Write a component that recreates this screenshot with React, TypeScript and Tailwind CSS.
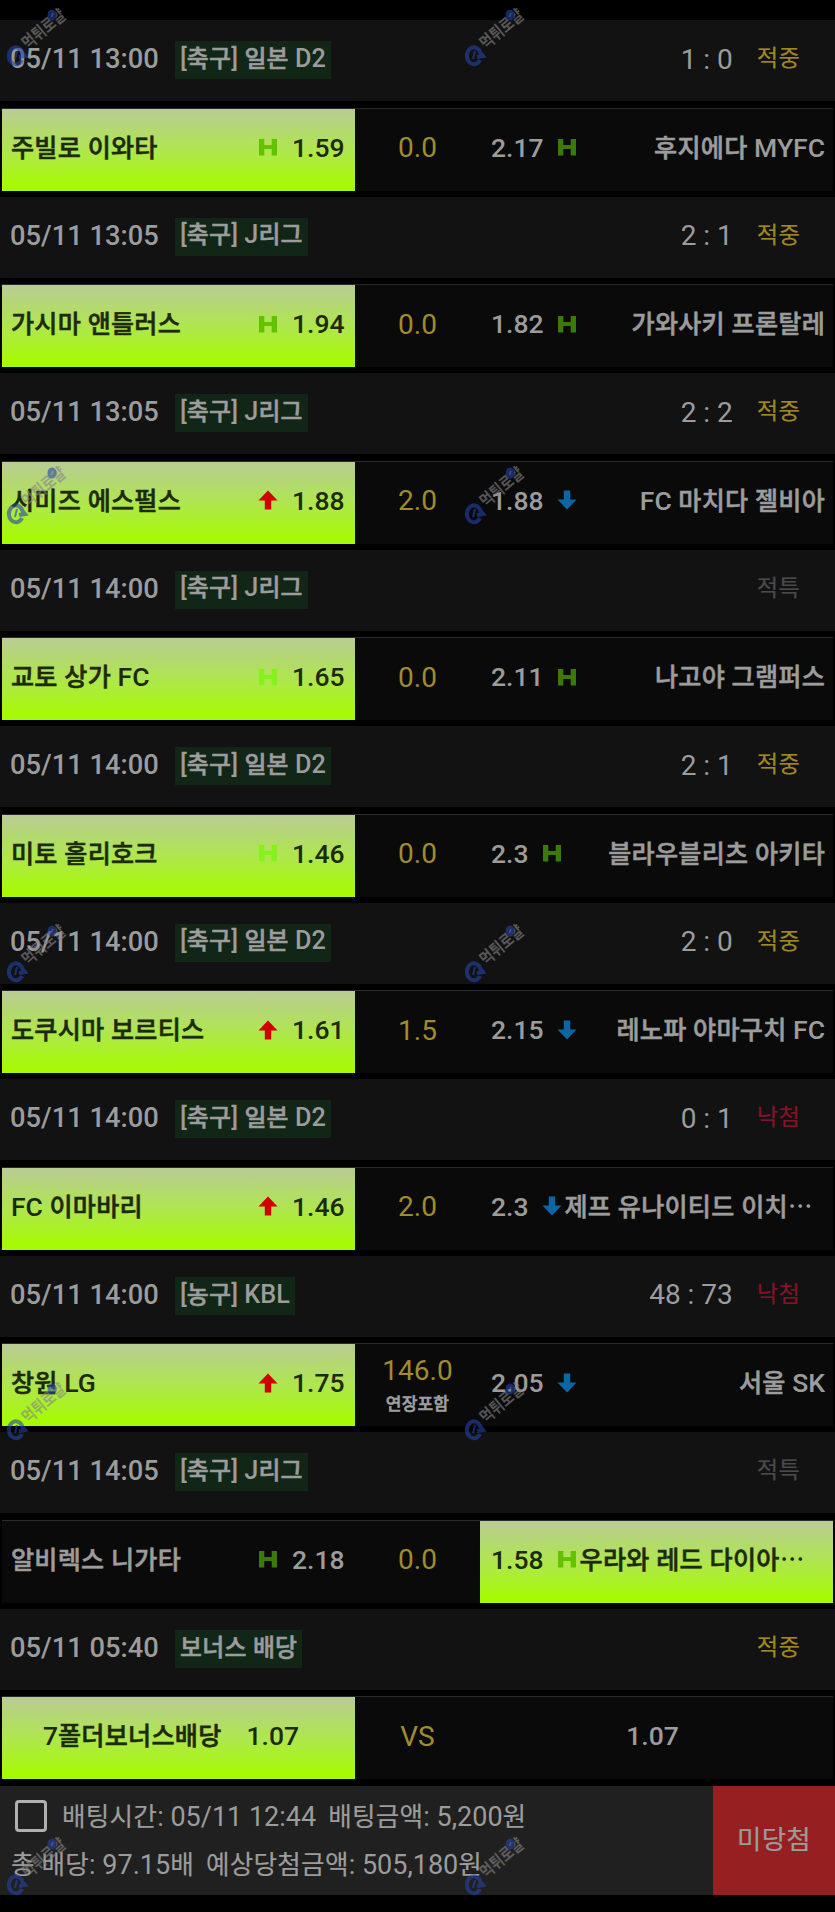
import type { ReactNode } from 'react'

type Mark = 'H' | 'G' | 'up' | 'down'
type Result = '적중' | '적특' | '낙첨'

interface Match {
  time: string
  league: string
  score?: string
  result: Result
  pick: 'home' | 'away'
  home: string
  homeOdds: string
  homeMark?: Mark
  line: string
  note?: string
  away?: string
  awayOdds: string
  awayMark?: Mark
}

const matches: Match[] = [
  { time: '05/11 13:00', league: '[축구] 일본 D2', score: '1 : 0', result: '적중', pick: 'home', home: '주빌로 이와타', homeOdds: '1.59', homeMark: 'H', line: '0.0', awayOdds: '2.17', awayMark: 'H', away: '후지에다 MYFC' },
  { time: '05/11 13:05', league: '[축구] J리그', score: '2 : 1', result: '적중', pick: 'home', home: '가시마 앤틀러스', homeOdds: '1.94', homeMark: 'H', line: '0.0', awayOdds: '1.82', awayMark: 'H', away: '가와사키 프론탈레' },
  { time: '05/11 13:05', league: '[축구] J리그', score: '2 : 2', result: '적중', pick: 'home', home: '시미즈 에스펄스', homeOdds: '1.88', homeMark: 'up', line: '2.0', awayOdds: '1.88', awayMark: 'down', away: 'FC 마치다 젤비아' },
  { time: '05/11 14:00', league: '[축구] J리그', result: '적특', pick: 'home', home: '교토 상가 FC', homeOdds: '1.65', homeMark: 'G', line: '0.0', awayOdds: '2.11', awayMark: 'H', away: '나고야 그램퍼스' },
  { time: '05/11 14:00', league: '[축구] 일본 D2', score: '2 : 1', result: '적중', pick: 'home', home: '미토 홀리호크', homeOdds: '1.46', homeMark: 'G', line: '0.0', awayOdds: '2.3', awayMark: 'H', away: '블라우블리츠 아키타' },
  { time: '05/11 14:00', league: '[축구] 일본 D2', score: '2 : 0', result: '적중', pick: 'home', home: '도쿠시마 보르티스', homeOdds: '1.61', homeMark: 'up', line: '1.5', awayOdds: '2.15', awayMark: 'down', away: '레노파 야마구치 FC' },
  { time: '05/11 14:00', league: '[축구] 일본 D2', score: '0 : 1', result: '낙첨', pick: 'home', home: 'FC 이마바리', homeOdds: '1.46', homeMark: 'up', line: '2.0', awayOdds: '2.3', awayMark: 'down', away: '제프 유나이티드 이치⋯' },
  { time: '05/11 14:00', league: '[농구] KBL', score: '48 : 73', result: '낙첨', pick: 'home', home: '창원 LG', homeOdds: '1.75', homeMark: 'up', line: '146.0', note: '연장포함', awayOdds: '2.05', awayMark: 'down', away: '서울 SK' },
  { time: '05/11 14:05', league: '[축구] J리그', result: '적특', pick: 'away', home: '알비렉스 니가타', homeOdds: '2.18', homeMark: 'H', line: '0.0', awayOdds: '1.58', awayMark: 'H', away: '우라와 레드 다이아⋯' },
  { time: '05/11 05:40', league: '보너스 배당', result: '적중', pick: 'home', home: '7폴더보너스배당', homeOdds: '1.07', line: 'VS', awayOdds: '1.07' },
]

const resultColor: Record<Result, string> = {
  적중: 'text-[#a08824]',
  적특: 'text-[#4a4a4a]',
  낙첨: 'text-[#84122a]',
}

// Hangul runs are set slightly smaller than the digits and latin letters
function Ko({ children, bold = false }: { children: string; bold?: boolean }) {
  return (
    <>
      {children.split(/([가-힣]+|⋯)/).map((part, i) => {
        if (i % 2 === 0) return part
        if (part === '⋯')
          return (
            <span key={i} className="inline-block w-[22px] origin-left scale-x-[0.92]">
              ⋯
            </span>
          )
        return (
          <span
            key={i}
            className={`font-['Noto_Sans_CJK_KR',sans-serif] text-[0.948em] tracking-[0.01em] ${
              bold ? '[-webkit-text-stroke:0.55px_currentColor]' : '[-webkit-text-stroke:0.2px_currentColor]'
            }`}
          >
            {part}
          </span>
        )
      })}
    </>
  )
}

function MarkIcon({ mark, active }: { mark: Mark; active: boolean }) {
  if (mark === 'up' || mark === 'down') {
    return (
      <svg viewBox="0 0 20 20" className={`mb-0.5 h-5 w-5 shrink-0 ${mark === 'up' ? 'text-[#d00000]' : 'rotate-180 text-[#0a66a4]'}`}>
        <path d="M10 0.5 19.5 10.5H13.2V19.5H6.8V10.5H0.5Z" fill="currentColor" />
      </svg>
    )
  }
  const color = mark === 'G' ? 'text-[#85f21c]' : active ? 'text-[#62c400]' : 'text-[#3b7a08]'
  return (
    <svg viewBox="0 0 20 20" className={`mb-0.5 h-5 w-5 shrink-0 ${color}`}>
      <path d="M1 2H6.3V8H13.7V2H19V18.5H13.7V12H6.3V18.5H1Z" fill="currentColor" />
    </svg>
  )
}

function Cell({ active, children, className }: { active: boolean; children: ReactNode; className: string }) {
  return (
    <div
      className={`flex h-full w-[353px] items-center whitespace-nowrap pb-[3px] text-[26.5px] font-medium ${
        active ? 'bg-linear-to-b/srgb from-[#b8cd90] from-3% via-[#afe64e] via-50% to-[#a6fa08] to-92% text-[#1d2a0a]' : ''
      } ${className}`}
    >
      {children}
    </div>
  )
}

function MatchBlock({ m }: { m: Match }) {
  const homeActive = m.pick === 'home'
  const awayActive = m.pick === 'away'
  return (
    <div className="h-[176.52px]">
      <div className="flex h-[81px] items-center bg-[#121212] pb-[3px] pl-2.5 pr-[35px]">
        <span className="w-[165px] pt-0.5 text-[27.3px] font-medium">{m.time}</span>
        <span className="mt-0.5 flex h-[38px] items-center whitespace-nowrap bg-[#112617] px-[5px] pb-1 text-[25.2px] font-medium">
          <span>
            <Ko bold>{m.league}</Ko>
          </span>
        </span>
        <span className="ml-auto mr-6 pt-px text-[28px]">{m.score}</span>
        <span className={`pb-0.5 text-[24.5px] ${resultColor[m.result]}`}>
          <Ko>{m.result}</Ko>
        </span>
      </div>
      <div className="mx-0.5 mt-[6.5px] flex h-[83px] border-t border-[#2a2a2a] bg-[#0a0a0a]">
        {m.away ? (
          <Cell active={homeActive} className="pl-[9px] pr-3">
            <span className="pb-px">
              <Ko bold>{m.home}</Ko>
            </span>
            <span className="ml-auto mr-3.5">{m.homeMark && <MarkIcon mark={m.homeMark} active={homeActive} />}</span>
            <span className="w-[51px] text-right">{m.homeOdds}</span>
          </Cell>
        ) : (
          <Cell active={homeActive} className="justify-center gap-[25px] pl-[9px] pr-6">
            <span className="pb-px">
              <Ko bold>{m.home}</Ko>
            </span>
            <span>{m.homeOdds}</span>
          </Cell>
        )}
        <div className={`flex w-[125px] flex-col items-center justify-center text-[28px] text-[#a08c2c] ${m.note ? 'pt-1' : 'pb-[3px]'}`}>
          <span className="leading-8">{m.line}</span>
          {m.note && (
            <span className="text-[18px] font-medium leading-8 tracking-[-0.07em] text-[#a0a0a0]">
              <Ko bold>{m.note}</Ko>
            </span>
          )}
        </div>
        {m.away ? (
          <Cell active={awayActive} className="pl-[11px] pr-2">
            <span className="mr-[13px]">{m.awayOdds}</span>
            {m.awayMark && <MarkIcon mark={m.awayMark} active={awayActive} />}
            <span className={m.away.endsWith('⋯') ? 'ml-[3px] pb-px' : 'ml-auto pb-px'}>
              <Ko bold>{m.away}</Ko>
            </span>
          </Cell>
        ) : (
          <Cell active={awayActive} className="justify-center pr-2">
            {m.awayOdds}
          </Cell>
        )}
      </div>
    </div>
  )
}

function Watermark({ className }: { className: string }) {
  return (
    <svg viewBox="0 0 62 62" className={`pointer-events-none absolute h-[62px] w-[62px] overflow-visible opacity-60 ${className}`}>
      <path d="M16 53A7 8.5 0 1 1 16.5 46L19 49 13 50" fill="none" stroke="#2444a8" strokeWidth="4" />
      <path d="M11 44 9 52" stroke="#2444a8" strokeWidth="2" />
      <text
        transform="translate(22 43) rotate(-40)"
        className="font-['Noto_Sans_CJK_KR',sans-serif] text-[17px] font-bold"
        textLength="51"
        lengthAdjust="spacingAndGlyphs"
        fill="#858585"
      >
        먹튀로얄
      </text>
      <ellipse cx="46" cy="8" rx="4.5" ry="5.5" fill="#2444a8" />
      <path d="M47 6 45.5 10" stroke="#6f7fb0" strokeWidth="1.5" />
    </svg>
  )
}

const watermarkRows = ['top-[7px]', 'top-[465px]', 'top-[923px]', 'top-[1381px]', 'top-[1836px]']

export default function App() {
  return (
    <div className="relative h-[1912px] w-[835px] overflow-hidden bg-black pt-5 font-['Roboto','Noto_Sans_CJK_KR',sans-serif] text-[27px] leading-none text-[#9c9c9c]">
      {matches.map((m, i) => (
        <MatchBlock key={i} m={m} />
      ))}

      <div className="mt-[0.8px] flex h-[109px] bg-[#202020]">
        <div className="flex flex-1 flex-col gap-4 whitespace-nowrap pl-[11px] pt-[15px]">
          <div className="flex h-8 items-center">
            <span className="mb-0.5 ml-1 mr-[15px] h-8 w-8 rounded border-[3px] border-[#b0b0b0]" />
            <span>
              <Ko>배팅시간: 05/11 12:44</Ko>
            </span>
            <span className="ml-3">
              <Ko>배팅금액: 5,200원</Ko>
            </span>
          </div>
          <div className="flex h-8 items-center">
            <span>
              <Ko>총 배당: 97.15배</Ko>
            </span>
            <span className="ml-3">
              <Ko>예상당첨금액: 505,180원</Ko>
            </span>
          </div>
        </div>
        <div className="flex w-[122px] items-center justify-center bg-[#962021] pb-1 text-[28px]">
          <Ko>미당첨</Ko>
        </div>
      </div>

      {watermarkRows.map((top) => (
        <div key={top}>
          <Watermark className={`left-[6px] ${top}`} />
          <Watermark className={`left-[464px] ${top}`} />
        </div>
      ))}
    </div>
  )
}
